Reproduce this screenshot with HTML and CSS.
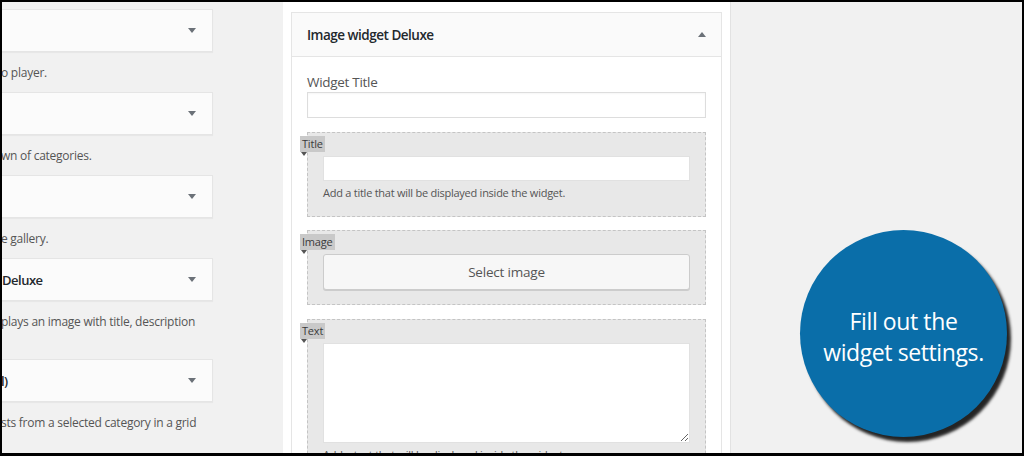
FILE: index.html
```html
<!DOCTYPE html>
<html lang="en">
<head>
<meta charset="utf-8">
<title>Image widget Deluxe</title>
<link rel="stylesheet" href="styles.css">
</head>
<body>
<div class="frame">
  <div class="available">
    <div class="item">
      <div class="item-top"><span class="item-name"></span><i class="arrow-down"></i></div>
      <p class="item-desc">o player.</p>
    </div>
    <div class="item">
      <div class="item-top"><span class="item-name"></span><i class="arrow-down"></i></div>
      <p class="item-desc">wn of categories.</p>
    </div>
    <div class="item">
      <div class="item-top"><span class="item-name"></span><i class="arrow-down"></i></div>
      <p class="item-desc">e gallery.</p>
    </div>
    <div class="item">
      <div class="item-top"><span class="item-name">Deluxe</span><i class="arrow-down"></i></div>
      <p class="item-desc">plays an image with title, description<br><span class="hidden-line">&nbsp;</span></p>
    </div>
    <div class="item">
      <div class="item-top"><span class="item-name cut">l)</span><i class="arrow-down"></i></div>
      <p class="item-desc">sts from a selected category in a grid</p>
    </div>
  </div>

  <div class="sidebar">
    <div class="widget">
      <div class="widget-head">
        <h3>Image widget Deluxe</h3>
        <i class="arrow-up"></i>
      </div>
      <div class="widget-body">
        <label class="wlabel">Widget Title</label>
        <input class="winput" type="text">

        <div class="field">
          <span class="tag">Title</span>
          <input class="finput" type="text">
          <p class="fdesc">Add a title that will be displayed inside the widget.</p>
        </div>

        <div class="field field-image">
          <span class="tag">Image</span>
          <button class="select-btn" type="button">Select image</button>
        </div>

        <div class="field">
          <span class="tag">Text</span>
          <textarea class="ftext"></textarea>
          <p class="fdesc">Add a text that will be displayed inside the widget.</p>
        </div>
      </div>
    </div>
  </div>

  <div class="callout-area">
    <div class="callout">
      <p>Fill out the<br>widget settings.</p>
    </div>
  </div>
</div>
</body>
</html>
```

FILE: styles.css
```css
* { box-sizing: border-box; }

html, body {
  margin: 0;
  padding: 0;
  background: #000;
}

body {
  width: 1024px;
  height: 456px;
  overflow: hidden;
  font-family: "Open Sans", "Noto Sans", sans-serif;
}

.frame {
  margin: 2px 2px 3px 2px;
  width: 1020px;
  height: 451px;
  background: #f1f1f1;
  overflow: hidden;
  display: flex;
  align-items: flex-start;
}

/* ---------- left: available widgets ---------- */
.available {
  width: 211px;
  flex: none;
  padding-top: 7px;
}

.item-top {
  height: 43px;
  background: #fbfbfb;
  border: 1px solid #e5e5e5;
  border-left: none;
  box-shadow: 0 1px 1px rgba(0, 0, 0, 0.04);
  display: flex;
  align-items: center;
  justify-content: space-between;
  padding: 0 16px 0 0;
}

.item-name {
  font-size: 13px;
  font-weight: 600;
  letter-spacing: -0.5px;
  color: #23282d;
  white-space: nowrap;
}

.item-name.cut { text-indent: -1px; }

.arrow-down {
  width: 0;
  height: 0;
  border-left: 4px solid transparent;
  border-right: 4px solid transparent;
  border-top: 5px solid #6b7178;
}

.item-desc {
  margin: 12px 0 10px 0;
  font-size: 12px;
  line-height: 18px;
  letter-spacing: -0.25px;
  color: #555;
  white-space: nowrap;
  text-indent: -1px;
}

.hidden-line { visibility: hidden; }

/* ---------- middle: sidebar ---------- */
.sidebar {
  margin-left: 70px;
  width: 448px;
  height: 100%;
  flex: none;
  background: #fff;
  border-right: 1px solid #e2e2e2;
  padding: 10px 0 0 8px;
}

.widget {
  width: 431px;
  border: 1px solid #e5e5e5;
  background: #fff;
}

.widget-head {
  height: 44px;
  background: #fafafa;
  border-bottom: 1px solid #e5e5e5;
  display: flex;
  align-items: center;
  justify-content: space-between;
  padding: 0 15px 0 15px;
}

.widget-head h3 {
  margin: 0;
  font-size: 13.5px;
  font-weight: 600;
  letter-spacing: -0.5px;
  color: #23282d;
}

.arrow-up {
  width: 0;
  height: 0;
  border-left: 4px solid transparent;
  border-right: 4px solid transparent;
  border-bottom: 5px solid #6b7178;
}

.widget-body {
  padding: 16px 15px 20px 15px;
}

.wlabel {
  display: block;
  font-size: 13.5px;
  line-height: 19px;
  letter-spacing: -0.3px;
  color: #555;
}

.winput {
  display: block;
  width: 100%;
  height: 26px;
  margin: 0;
  border: 1px solid #ddd;
  background: #fff;
  box-shadow: inset 0 1px 2px rgba(0, 0, 0, 0.04);
}

.field {
  position: relative;
  margin-top: 14px;
  background: #e8e8e8;
  border: 1px dashed #c4c4c4;
  padding: 23px 15px 15px 15px;
}

.field-image {
  margin-top: 13px;
  padding-bottom: 14px;
}

.tag {
  position: absolute;
  top: 3px;
  left: -8px;
  height: 16px;
  padding: 0 2px 0 2px;
  background: #c9c9c9;
  font-size: 11px;
  line-height: 16px;
  letter-spacing: -0.2px;
  color: #3a3a3a;
}

.tag::after {
  content: "";
  position: absolute;
  left: 1px;
  top: 16px;
  width: 0;
  height: 0;
  border-left: 3px solid transparent;
  border-right: 3px solid transparent;
  border-top: 4px solid #555;
}

.finput {
  display: block;
  width: 100%;
  height: 25px;
  margin: 0;
  border: 1px solid #e1e1e1;
  background: #fff;
}

.fdesc {
  margin: 4px 0 0 0;
  font-size: 11px;
  line-height: 16px;
  letter-spacing: -0.25px;
  color: #555;
}

.select-btn {
  display: block;
  width: 100%;
  height: 36px;
  margin: 0;
  background: #f7f7f7;
  border: 1px solid #ccc;
  border-radius: 3px;
  box-shadow: 0 1px 0 #ccc;
  font-family: "Open Sans", "Noto Sans", sans-serif;
  font-size: 13.5px;
  letter-spacing: -0.2px;
  color: #555;
}

.ftext {
  display: block;
  width: 100%;
  height: 100px;
  margin: 0;
  border: 1px solid #e1e1e1;
  background: #fff;
  resize: both;
}

/* ---------- right: callout ---------- */
.callout-area {
  flex: 1;
  padding: 228px 0 0 69px;
}

.callout {
  width: 207px;
  height: 207px;
  border-radius: 50%;
  background: #0a6ea9;
  box-shadow: 4px 5px 3px rgba(0, 0, 0, 0.85);
  display: flex;
  align-items: center;
  justify-content: center;
}

.callout p {
  margin: 6px 0 0 0;
  text-align: center;
  color: #fff;
  font-family: "Open Sans", "Noto Sans", sans-serif;
  font-size: 23px;
  line-height: 31px;
  letter-spacing: -0.4px;
}
```
